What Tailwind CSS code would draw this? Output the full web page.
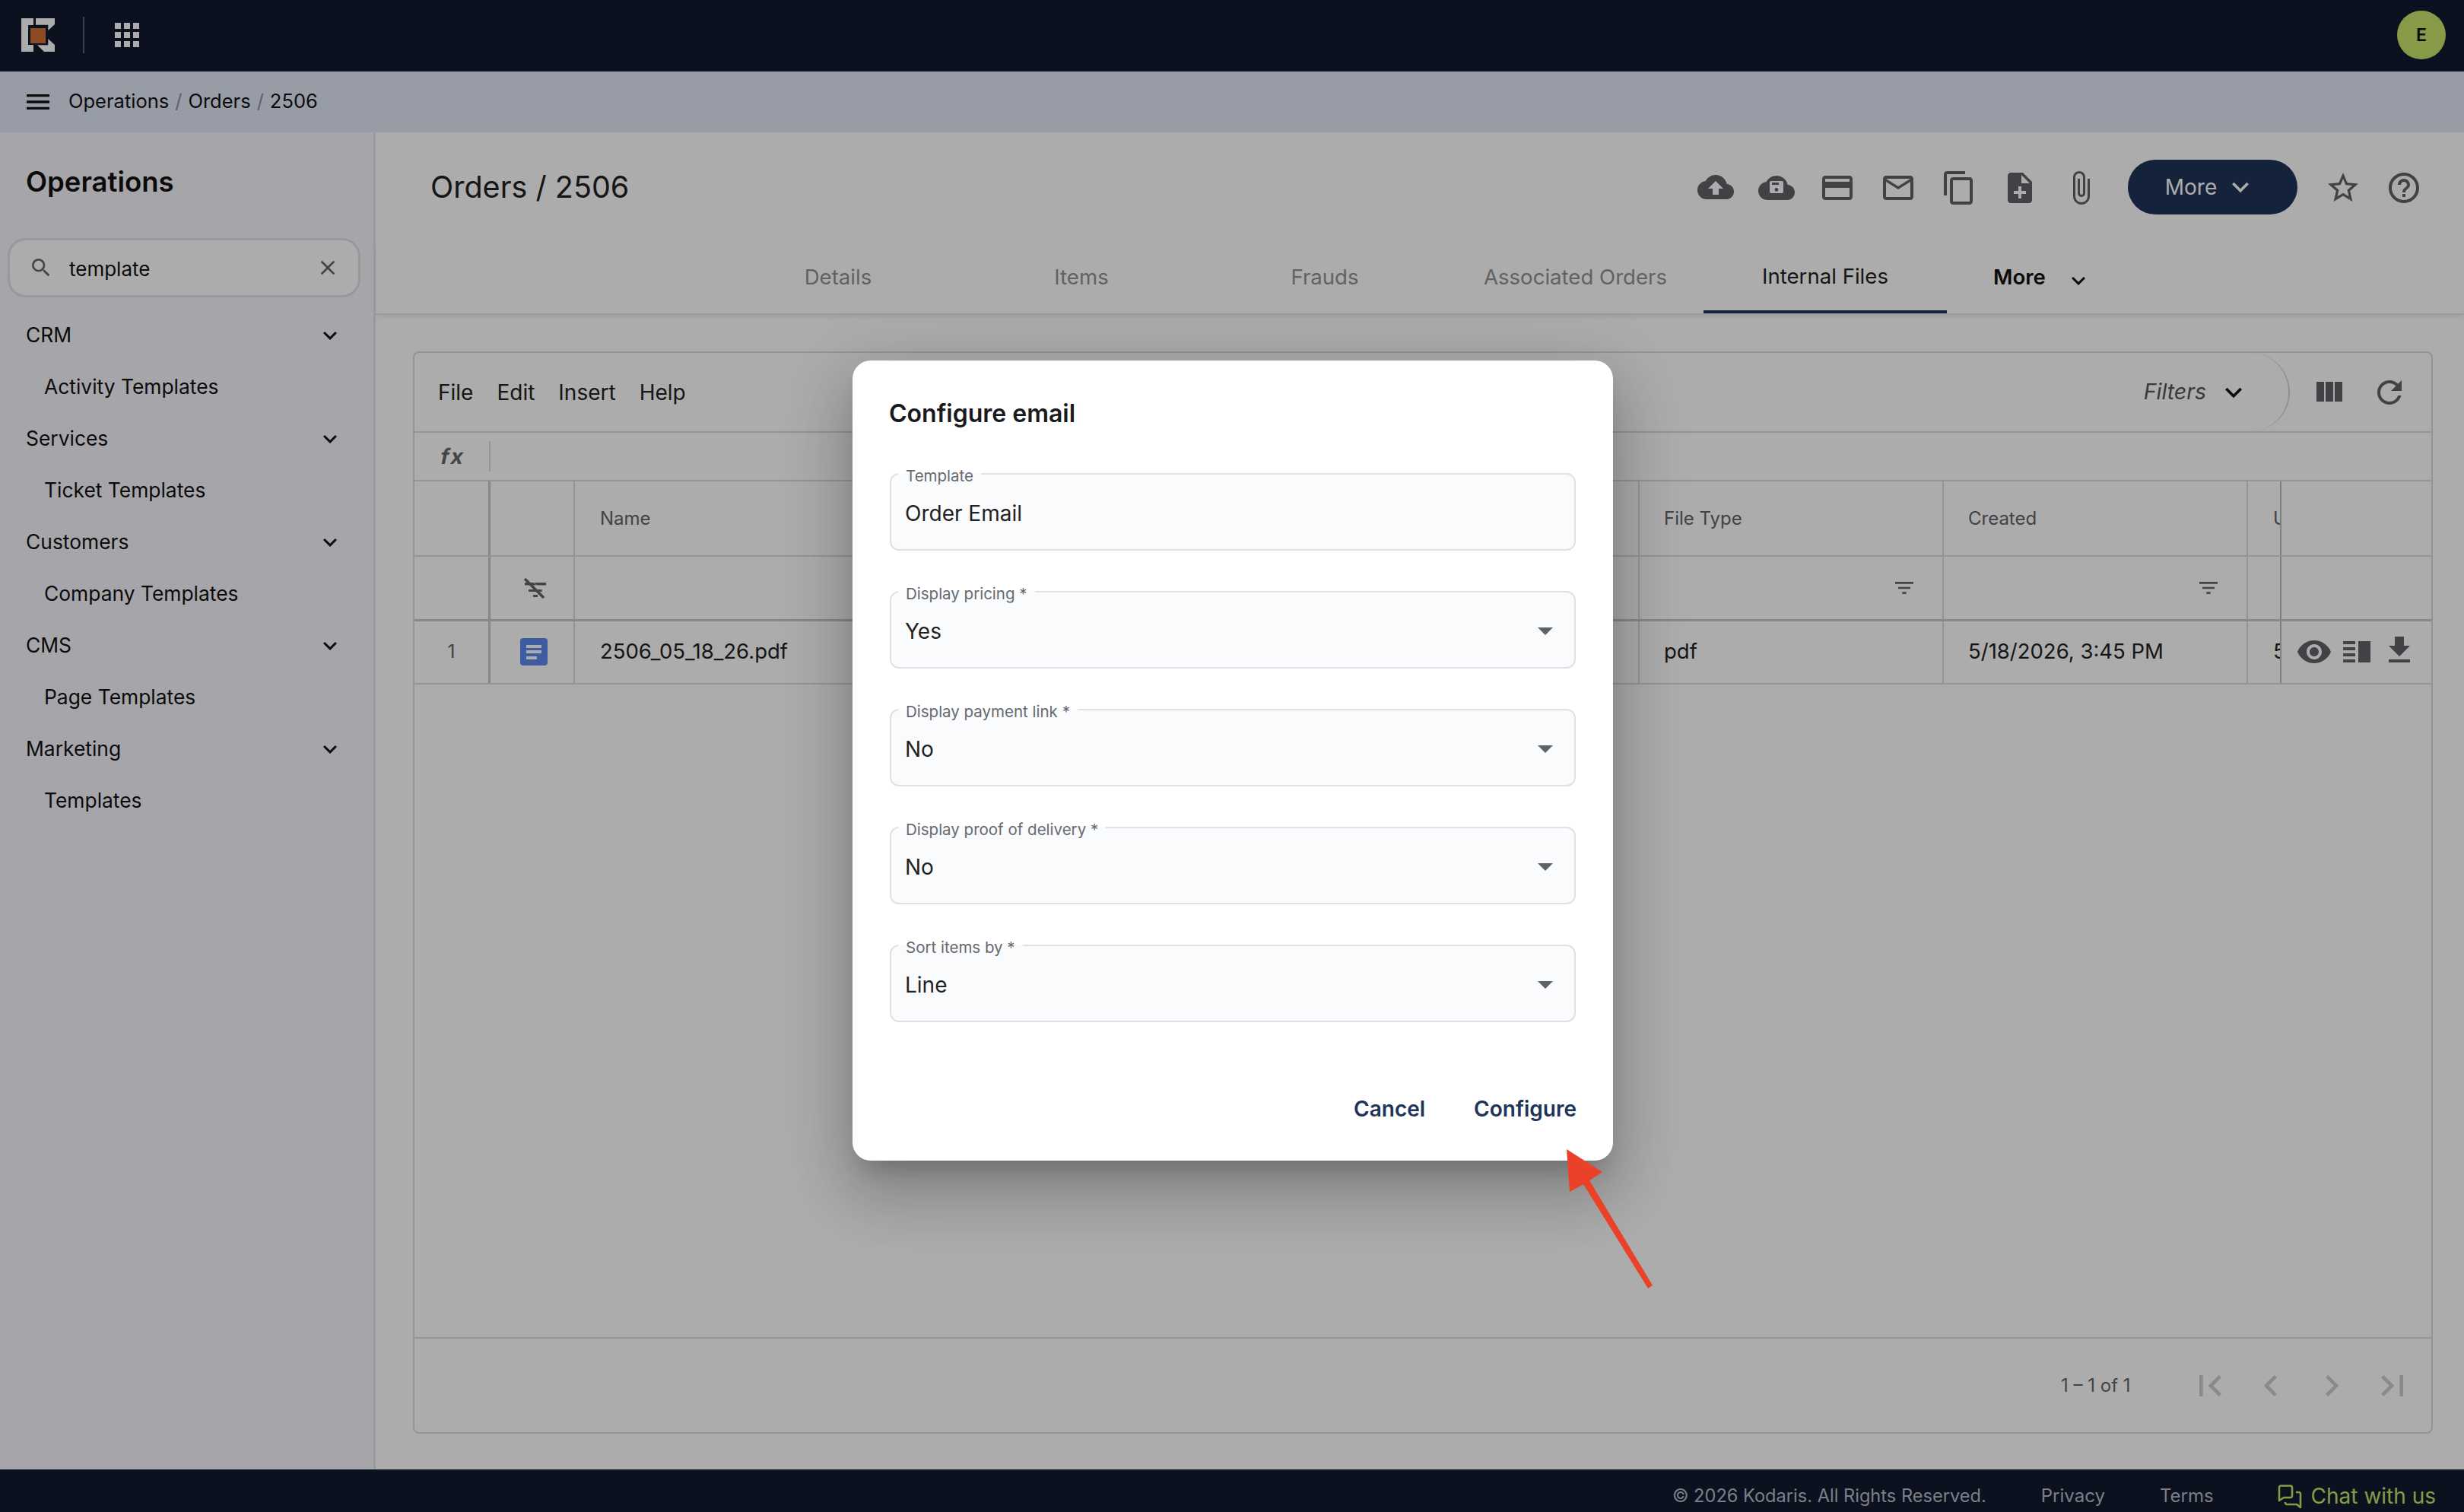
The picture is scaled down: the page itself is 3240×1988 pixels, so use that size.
<!DOCTYPE html>
<html lang="en">
<head>
<meta charset="utf-8">
<title>Orders / 2506</title>
<script src="https://cdn.jsdelivr.net/npm/@tailwindcss/browser@4"></script>
</head>
<body class="[font-family:Inter,sans-serif]">
<div class="relative w-[3240px] h-[1988px] overflow-hidden flex flex-col bg-white text-[#111]">

  <!-- top bar -->
  <header class="h-[94px] shrink-0 bg-[#111a2d] border-b-2 border-[#1a2234] flex items-center">
    <svg class="ml-[28px] w-[44px] h-[44px]" viewBox="0 0 44 44"><path fill="#fff" d="M0 0h16v9H9v26h7v9H0zM19 0h25v8l-8.700 8V8.700H19zM35.300 27 44 35v9H30l-9-8.700h14.300z"/><rect x="12" y="13" width="20" height="20" fill="#d26e37"/></svg>
    <div class="ml-[37px] w-[2px] h-[48px] bg-[#59606c]"></div>
    <svg class="ml-[32px] w-[48px] h-[48px]" viewBox="0 0 24 24" fill="#fff"><path d="M4 8h4V4H4v4zm6 12h4v-4h-4v4zm-6 0h4v-4H4v4zm0-6h4v-4H4v4zm6 0h4v-4h-4v4zm6-10v4h4V4h-4zm-6 4h4V4h-4v4zm6 6h4v-4h-4v4zm0 6h4v-4h-4v4z"/></svg>
    <div class="ml-auto mr-[24px] w-[64px] h-[64px] rounded-full bg-[#c9e56c] flex items-center justify-center text-[23px] font-semibold text-[#111]">E</div>
  </header>

  <!-- breadcrumb bar -->
  <nav class="h-[80px] shrink-0 bg-[#e2e8f6] flex items-center text-[25.5px] text-[#111] pb-[1px]">
    <svg class="ml-[30px] w-[40px] h-[40px]" viewBox="0 0 24 24" fill="#111"><path d="M3 18h18v-2H3v2zm0-5h18v-2H3v2zm0-7v2h18V6H3z"/></svg>
    <span class="ml-[20px]">Operations</span>
    <span class="mx-[8px] text-[#8d919b]">/</span>
    <span>Orders</span>
    <span class="mx-[8px] text-[#8d919b]">/</span>
    <span>2506</span>
  </nav>

  <div class="flex-1 flex min-h-0">
    <!-- sidebar -->
    <aside class="w-[494px] shrink-0 bg-[#f6f7fc] border-r-[3px] border-[#e3e4e8] flex flex-col">
      <div class="h-[130px] pl-[34px] flex items-center text-[36.5px] font-semibold">Operations</div>
      <div class="ml-[10px] mt-[9px] w-[464px] h-[78px] rounded-[24px] bg-white border-[3px] border-[#e0e1e5] flex items-center pl-[25px] pr-[24px] text-[26px]">
        <svg class="w-[32px] h-[32px] shrink-0" viewBox="0 0 24 24" fill="#666"><path d="M15.500 14h-.79l-.28-.27A6.470 6.470 0 0 0 16 9.500 6.500 6.500 0 1 0 9.500 16c1.610 0 3.090-.59 4.230-1.570l.27.28v.79l5 4.990L20.490 19l-4.990-5zm-6 0C7.010 14 5 11.990 5 9.500S7.010 5 9.500 5 14 7.010 14 9.500 11.990 14 9.500 14z"/></svg>
        <span class="ml-[21px] mt-[2px]">template</span>
        <svg class="ml-auto w-[32px] h-[32px]" viewBox="0 0 24 24" fill="#666"><path d="M19 6.410 17.590 5 12 10.590 6.410 5 5 6.410 10.590 12 5 17.590 6.410 19 12 13.410 17.590 19 19 17.590 13.410 12z"/></svg>
      </div>
      <ul class="mt-[16px] text-[26.4px]">
        <li class="h-[68px] pl-[34px] pr-[39px] flex items-center justify-between">CRM<svg class="w-[36px] h-[36px]" viewBox="0 0 24 24" fill="#111"><path d="M7.410 8.590 12 13.170l4.590-4.580L18 10l-6 6-6-6z"/></svg></li>
        <li class="h-[68px] pl-[58px] flex items-center">Activity Templates</li>
        <li class="h-[68px] pl-[34px] pr-[39px] flex items-center justify-between">Services<svg class="w-[36px] h-[36px]" viewBox="0 0 24 24" fill="#111"><path d="M7.410 8.590 12 13.170l4.590-4.580L18 10l-6 6-6-6z"/></svg></li>
        <li class="h-[68px] pl-[58px] flex items-center">Ticket Templates</li>
        <li class="h-[68px] pl-[34px] pr-[39px] flex items-center justify-between">Customers<svg class="w-[36px] h-[36px]" viewBox="0 0 24 24" fill="#111"><path d="M7.410 8.590 12 13.170l4.590-4.580L18 10l-6 6-6-6z"/></svg></li>
        <li class="h-[68px] pl-[58px] flex items-center">Company Templates</li>
        <li class="h-[68px] pl-[34px] pr-[39px] flex items-center justify-between">CMS<svg class="w-[36px] h-[36px]" viewBox="0 0 24 24" fill="#111"><path d="M7.410 8.590 12 13.170l4.590-4.580L18 10l-6 6-6-6z"/></svg></li>
        <li class="h-[68px] pl-[58px] flex items-center">Page Templates</li>
        <li class="h-[68px] pl-[34px] pr-[39px] flex items-center justify-between">Marketing<svg class="w-[36px] h-[36px]" viewBox="0 0 24 24" fill="#111"><path d="M7.410 8.590 12 13.170l4.590-4.580L18 10l-6 6-6-6z"/></svg></li>
        <li class="h-[68px] pl-[58px] flex items-center">Templates</li>
      </ul>
    </aside>

    <!-- main -->
    <main class="flex-1 min-w-0 flex flex-col bg-white">
      <div class="h-[146px] shrink-0 flex items-center pl-[72px] pr-[55px]">
        <h1 class="text-[39.5px] text-[#222]">Orders / 2506</h1>
        <div class="ml-auto flex items-center text-[#555860]">
          <div class="flex items-center gap-[32px] fill-[#5f6369]">
            <svg class="w-[48px] h-[48px] -mt-[3px]" viewBox="0 0 24 24"><path d="M19.350 10.040C18.670 6.590 15.640 4 12 4 9.110 4 6.600 5.640 5.350 8.040 2.340 8.360 0 10.910 0 14c0 3.310 2.690 6 6 6h13c2.760 0 5-2.240 5-5 0-2.640-2.050-4.780-4.650-4.960zM14 13v4h-4v-4H7l5-5 5 5h-3z"/></svg>
            <svg class="w-[48px] h-[48px]" viewBox="0 0 24 24"><path fill-rule="evenodd" d="M19.350 10.040C18.670 6.590 15.640 4 12 4 9.110 4 6.600 5.640 5.350 8.040 2.340 8.360 0 10.910 0 14c0 3.310 2.690 6 6 6h13c2.760 0 5-2.240 5-5 0-2.640-2.050-4.780-4.650-4.960zM8.500 7.500h7a1 1 0 0 1 1 1v6a1 1 0 0 1-1 1h-7a1 1 0 0 1-1-1v-6a1 1 0 0 1 1-1zM9 8.500h4.500V10H9zM12 12a1.200 1.200 0 1 0 0 2.400 1.200 1.200 0 0 0 0-2.400z"/></svg>
            <svg class="w-[48px] h-[48px]" viewBox="0 0 24 24"><path d="M20 4H4c-1.110 0-1.990.89-1.990 2L2 18c0 1.110.89 2 2 2h16c1.110 0 2-.89 2-2V6c0-1.110-.89-2-2-2zm0 14H4v-6h16v6zm0-10H4V6h16v2z"/></svg>
            <svg class="w-[48px] h-[48px]" viewBox="0 0 24 24"><path d="M20 4H4c-1.100 0-1.990.9-1.990 2L2 18c0 1.100.9 2 2 2h16c1.100 0 2-.9 2-2V6c0-1.100-.9-2-2-2zm0 14H4V8l8 5 8-5v10zm-8-7L4 6h16l-8 5z"/></svg>
            <svg class="w-[48px] h-[48px]" viewBox="0 0 24 24"><path d="M16 1H4c-1.100 0-2 .9-2 2v14h2V3h12V1zm3 4H8c-1.100 0-2 .9-2 2v14c0 1.100.9 2 2 2h11c1.100 0 2-.9 2-2V7c0-1.100-.9-2-2-2zm0 16H8V7h11v14z"/></svg>
            <svg class="w-[48px] h-[48px]" viewBox="0 0 24 24"><path d="M14 2H6c-1.100 0-1.990.9-1.990 2L4 20c0 1.100.89 2 1.990 2H18c1.100 0 2-.9 2-2V8l-6-6zm2 14h-3v3h-2v-3H8v-2h3v-3h2v3h3v2zm-3-7V3.500L18.500 9H13z"/></svg>
            <svg class="w-[48px] h-[48px]" viewBox="0 0 24 24"><path d="M16.500 6v11.500c0 2.210-1.790 4-4 4s-4-1.790-4-4V5c0-1.380 1.120-2.500 2.500-2.500s2.500 1.120 2.500 2.500v10.500c0 .55-.45 1-1 1s-1-.45-1-1V6H10v9.500c0 1.380 1.120 2.500 2.500 2.500s2.500-1.120 2.500-2.500V5c0-2.210-1.790-4-4-4S7 2.790 7 5v12.500c0 3.040 2.460 5.500 5.500 5.500s5.500-2.460 5.500-5.500V6h-1.500z"/></svg>
          </div>
          <button class="ml-[38px] w-[223px] h-[72px] rounded-[36px] bg-[#1e3458] text-white text-[28px] flex items-center justify-center gap-[9px] -mt-[2px] pr-[2px]"><span class="-ml-[2px]">More</span><svg class="w-[44px] h-[44px]" viewBox="0 0 24 24" fill="#fff"><path d="M7.410 8.590 12 13.170l4.590-4.580L18 10l-6 6-6-6z"/></svg></button>
          <svg class="ml-[36px] w-[48px] h-[48px] fill-[#5f6369]" viewBox="0 0 24 24"><path d="M22 9.240l-7.190-.62L12 2 9.190 8.630 2 9.240l5.460 4.730L5.820 21 12 17.270 18.180 21l-1.630-7.030L22 9.240zM12 15.400l-3.760 2.270 1-4.280-3.320-2.880 4.380-.38L12 6.100l1.710 4.040 4.380.38-3.320 2.880 1 4.280L12 15.400z"/></svg>
          <svg class="ml-[32px] w-[48px] h-[48px] fill-[#5f6369]" viewBox="0 0 24 24"><path d="M11 18h2v-2h-2v2zm1-16C6.480 2 2 6.480 2 12s4.480 10 10 10 10-4.480 10-10S17.520 2 12 2zm0 18c-4.410 0-8-3.590-8-8s3.590-8 8-8 8 3.590 8 8-3.590 8-8 8zm0-14c-2.210 0-4 1.790-4 4h2c0-1.100.9-2 2-2s2 .9 2 2c0 2-3 1.750-3 5h2c0-2.250 3-2.500 3-5 0-2.210-1.790-4-4-4z"/></svg>
        </div>
      </div>

      <!-- tabs -->
      <div class="h-[94px] shrink-0 border-b-2 border-[#e6e8ec] shadow-[0_5px_6px_-3px_rgba(0,0,0,0.1)] flex pl-[447px] text-[27.6px] text-[#8f9298]">
        <div class="w-[320px] flex items-center justify-center pb-[2px] pl-[2px]">Details</div>
        <div class="w-[320px] flex items-center justify-center pb-[2px] pl-[2px]">Items</div>
        <div class="w-[320px] flex items-center justify-center pb-[2px] pl-[2px]">Frauds</div>
        <div class="w-[339px] flex items-center justify-center pb-[2px] pl-[2px]">Associated Orders</div>
        <div class="w-[320px] flex items-center justify-center text-[#222] border-b-4 border-[#1e3458]">Internal Files</div>
        <div class="w-[240px] flex items-center pl-[61px] pb-[2px] gap-[25px] text-[#111] font-semibold">More<svg class="w-[36px] h-[36px] mt-[8px]" viewBox="0 0 24 24" fill="#111"><path d="M7.410 8.590 12 13.170l4.590-4.580L18 10l-6 6-6-6z"/></svg></div>
      </div>

      <!-- grid panel -->
      <section class="mt-[48px] mb-[47px] ml-[49px] mr-[41px] flex-1 min-h-0 border-2 border-[#dcdcdc] rounded-[8px] flex flex-col">
        <div class="h-[105px] shrink-0 border-b-2 border-[#dcdcdc] flex items-center text-[28px] text-[#222] pl-[31px]">
          <span>File</span><span class="ml-[31px]">Edit</span><span class="ml-[31px]">Insert</span><span class="ml-[31px]">Help</span>
          <div class="ml-auto h-full w-[385px] border-r-2 border-[#d6d6d6] rounded-r-[60px] flex items-center justify-end pr-[50px] gap-[14px]">
            <span class="italic text-[28.5px] text-[#555]">Filters</span>
            <svg class="w-[44px] h-[44px]" viewBox="0 0 24 24" fill="#111"><path d="M7.410 8.590 12 13.170l4.590-4.580L18 10l-6 6-6-6z"/></svg>
          </div>
          <div class="w-[186px] flex items-center gap-[32px] pl-[27px]">
            <svg class="w-[48px] h-[48px]" viewBox="0 0 24 24" fill="#5f6369"><path d="M10 18h5V5h-5v13zm-6 0h5V5H4v13zM16 5v13h5V5h-5z"/></svg>
            <svg class="w-[48px] h-[48px]" viewBox="0 0 24 24" fill="#5f6369"><path d="M17.650 6.350C16.200 4.900 14.210 4 12 4c-4.420 0-7.990 3.580-7.990 8s3.570 8 7.990 8c3.730 0 6.840-2.550 7.730-6h-2.080c-.82 2.330-3.040 4-5.650 4-3.310 0-6-2.690-6-6s2.690-6 6-6c1.660 0 3.140.69 4.220 1.780L13 11h7V4l-2.350 2.350z"/></svg>
          </div>
        </div>
        <div class="h-[64px] shrink-0 border-b-2 border-[#dcdcdc] flex items-center">
          <div class="w-[98px] pl-[35px]"><span class="inline-block -skew-x-12 tracking-[2px] font-bold text-[28px] text-[#666]">fx</span></div>
          <div class="w-[2px] h-[40px] bg-[#dcdcdc]"></div>
        </div>
        <!-- header row -->
        <div class="h-[99px] shrink-0 border-b-2 border-[#dcdcdc] flex text-[24px] text-[#5f6369]">
          <div class="w-[100px] border-r-[3px] border-[#c4c7cc]"></div>
          <div class="w-[111px] border-r-2 border-[#dcdcdc]"></div>
          <div class="w-[1400px] border-r-2 border-[#dcdcdc] pl-[33px] flex items-center">Name</div>
          <div class="w-[400px] border-r-2 border-[#dcdcdc] pl-[32px] flex items-center">File Type</div>
          <div class="w-[400px] border-r-2 border-[#dcdcdc] pl-[32px] flex items-center">Created</div>
          <div class="w-[44px] border-r-2 border-[#b9bcc2] pl-[33px] flex items-center overflow-hidden">U</div>
          <div class="flex-1"></div>
        </div>
        <!-- filter row -->
        <div class="h-[85px] shrink-0 border-b-[3px] border-[#c8cacd] flex">
          <div class="w-[100px] border-r-[3px] border-[#c4c7cc]"></div>
          <div class="w-[111px] border-r-2 border-[#dcdcdc] flex items-center justify-center">
            <svg class="w-[36px] h-[36px] ml-[8px]" viewBox="0 0 36 36" fill="#666"><path d="M4 11h28v3.500H4zM9 20h18v3H9zM15 27h6v3h-6z"/><path d="M4 6l25 25" stroke="#666" stroke-width="3.500"/><path d="M8 3l25 25" stroke="#fff" stroke-opacity=".45" stroke-width="1.200"/></svg>
          </div>
          <div class="w-[1400px] border-r-2 border-[#dcdcdc]"></div>
          <div class="w-[400px] border-r-2 border-[#dcdcdc] flex items-center justify-end pr-[34px]">
            <svg class="w-[32px] h-[32px]" viewBox="0 0 24 24" fill="#666"><path d="M10 18h4v-2h-4v2zM3 6v2h18V6H3zm3 7h12v-2H6v2z"/></svg>
          </div>
          <div class="w-[400px] border-r-2 border-[#dcdcdc] flex items-center justify-end pr-[34px]">
            <svg class="w-[32px] h-[32px]" viewBox="0 0 24 24" fill="#666"><path d="M10 18h4v-2h-4v2zM3 6v2h18V6H3zm3 7h12v-2H6v2z"/></svg>
          </div>
          <div class="w-[44px] border-r-2 border-[#b9bcc2]"></div>
          <div class="flex-1"></div>
        </div>
        <!-- data row -->
        <div class="h-[83px] shrink-0 border-b-2 border-[#dcdcdc] flex items-center text-[27.5px] text-[#222]">
          <div class="w-[100px] h-full border-r-[3px] border-[#c4c7cc] flex items-center justify-center text-[24.5px] text-[#5f6369] pb-[2px]">1</div>
          <div class="w-[111px] h-full border-r-2 border-[#dcdcdc] flex items-center justify-center pb-[2px]">
            <svg class="w-[36px] h-[36px] ml-[5px]" viewBox="0 0 36 36"><rect width="36" height="36" rx="4" fill="#5d8bed"/><path fill="#fff" d="M8 9h20v4H8zM8 16h20v4H8zM8 24h14v4H8z"/></svg>
          </div>
          <div class="w-[1400px] h-full border-r-2 border-[#dcdcdc] pl-[33px] flex items-center pb-[2px]">2506_05_18_26.pdf</div>
          <div class="w-[400px] h-full border-r-2 border-[#dcdcdc] pl-[32px] flex items-center pb-[2px]">pdf</div>
          <div class="w-[400px] h-full border-r-2 border-[#dcdcdc] pl-[32px] flex items-center pb-[2px]">5/18/2026, 3:45 PM</div>
          <div class="w-[44px] h-full border-r-2 border-[#b9bcc2] pl-[33px] flex items-center overflow-hidden pb-[2px]">5</div>
          <div class="flex-1 h-full flex items-center pl-[19px] gap-[8px] pb-[2px]">
            <svg class="w-[48px] h-[48px]" viewBox="0 0 24 24" fill="#5f6369"><path d="M12 4.500C7 4.500 2.730 7.610 1 12c1.730 4.390 6 7.500 11 7.500s9.270-3.110 11-7.500c-1.730-4.390-6-7.500-11-7.500zM12 17c-2.760 0-5-2.240-5-5s2.240-5 5-5 5 2.240 5 5-2.240 5-5 5zm0-8c-1.660 0-3 1.340-3 3s1.340 3 3 3 3-1.340 3-3-1.340-3-3-3z"/></svg>
            <svg class="w-[48px] h-[48px]" viewBox="0 0 24 24" fill="#5f6369"><path d="M3 15h8v-2H3v2zm0 4h8v-2H3v2zm0-8h8V9H3v2zm0-6v2h8V5H3zm10 0h8v14h-8V5z"/></svg>
            <svg class="w-[48px] h-[48px] -mt-[4px]" viewBox="0 0 24 24" fill="#5f6369"><path d="M19 9h-4V3H9v6H5l7 7 7-7zM5 18v2h14v-2H5z"/></svg>
          </div>
        </div>
        <div class="flex-1"></div>
        <!-- pagination -->
        <div class="h-[125px] shrink-0 border-t-2 border-[#dcdcdc] flex items-center text-[24px] text-[#666] pl-[2165px]">
          <span class="whitespace-nowrap">1 – 1 of 1</span>
          <div class="ml-[76px] flex items-center gap-[24px] fill-[#cdcdcd]">
            <svg class="w-[56px] h-[56px]" viewBox="0 0 24 24"><path d="M18.410 16.590 13.820 12l4.590-4.590L17 6l-6 6 6 6zM6 6h2v12H6z"/></svg>
            <svg class="w-[56px] h-[56px]" viewBox="0 0 24 24"><path d="M15.410 7.410 14 6l-6 6 6 6 1.410-1.410L10.830 12z"/></svg>
            <svg class="w-[56px] h-[56px]" viewBox="0 0 24 24"><path d="M10 6 8.590 7.410 13.170 12l-4.580 4.590L10 18l6-6z"/></svg>
            <svg class="w-[56px] h-[56px]" viewBox="0 0 24 24"><path d="M5.590 7.410 10.180 12l-4.590 4.590L7 18l6-6-6-6zM16 6h2v12h-2z"/></svg>
          </div>
        </div>
      </section>
    </main>
  </div>

  <!-- footer -->
  <footer class="h-[56px] shrink-0 bg-[#111a2d] border-t-2 border-[#1a2234] flex items-center justify-end pr-[37px] text-[24px] text-[#b8bdc8] pt-[12px]">
    <span class="text-[23.6px]">© 2026 Kodaris. All Rights Reserved.</span>
    <span class="ml-[72px]">Privacy</span>
    <span class="ml-[72px]">Terms</span>
    <svg class="ml-[84px] w-[32px] h-[32px] mt-[2px]" viewBox="0 0 32 32" fill="none" stroke="#c9e56c" stroke-width="2.600" stroke-linejoin="round"><path d="M2 3.500C2 2.500 3 1.500 4 1.500h13c1 0 2 1 2 2V15c0 1-1 2-2 2H8l-6 4z"/><path d="M24 10h4c1 0 2 1 2 2v18l-5-4H12c-1 0-2-1-2-2v-1"/></svg>
    <span class="ml-[12px] text-[28px] text-[#c9e56c]">Chat with us</span>
  </footer>

  <!-- modal backdrop -->
  <div class="absolute inset-0 bg-black/[0.325]"></div>

  <!-- modal -->
  <div class="absolute left-[1121px] top-[474px] w-[1000px] h-[1052px] rounded-[24px] bg-white px-[49px] shadow-[0_22px_30px_-14px_rgba(0,0,0,0.2),0_48px_76px_6px_rgba(0,0,0,0.14),0_18px_92px_16px_rgba(0,0,0,0.12)] flex flex-col">
    <h2 class="h-[148px] pt-[46px] text-[32px] font-semibold text-[#1a1a1e] -ml-[1px]">Configure email</h2>
    <div class="flex flex-col gap-[53px]">
      <div class="relative h-[102px] rounded-[12px] border-2 border-[#e0e1e4] bg-[#fafbfd] pl-[18px] pr-[28px] flex items-center">
        <span class="absolute left-[9px] -top-[10px] px-[10px] h-[24px] leading-[24px] text-[20.5px] text-[#666a70] bg-[linear-gradient(#fff_33%,#fafbfd_33%)]">Template</span>
        <span class="text-[28px] text-[#222] mt-[3px]">Order Email</span>
      </div>
      <div class="relative h-[102px] rounded-[12px] border-2 border-[#e0e1e4] bg-[#fafbfd] pl-[18px] pr-[28px] flex items-center justify-between">
        <span class="absolute left-[9px] -top-[10px] px-[10px] h-[24px] leading-[24px] text-[20.5px] text-[#666a70] bg-[linear-gradient(#fff_33%,#fafbfd_33%)]">Display pricing *</span>
        <span class="text-[28px] text-[#222] mt-[3px]">Yes</span>
        <span class="w-0 h-0 border-x-[10px] border-x-transparent border-t-[10px] border-t-[#5f6369] mt-[4px]"></span>
      </div>
      <div class="relative h-[102px] rounded-[12px] border-2 border-[#e0e1e4] bg-[#fafbfd] pl-[18px] pr-[28px] flex items-center justify-between">
        <span class="absolute left-[9px] -top-[10px] px-[10px] h-[24px] leading-[24px] text-[20.5px] text-[#666a70] bg-[linear-gradient(#fff_33%,#fafbfd_33%)]">Display payment link *</span>
        <span class="text-[28px] text-[#222] mt-[3px]">No</span>
        <span class="w-0 h-0 border-x-[10px] border-x-transparent border-t-[10px] border-t-[#5f6369] mt-[4px]"></span>
      </div>
      <div class="relative h-[102px] rounded-[12px] border-2 border-[#e0e1e4] bg-[#fafbfd] pl-[18px] pr-[28px] flex items-center justify-between">
        <span class="absolute left-[9px] -top-[10px] px-[10px] h-[24px] leading-[24px] text-[20.5px] text-[#666a70] bg-[linear-gradient(#fff_33%,#fafbfd_33%)]">Display proof of delivery *</span>
        <span class="text-[28px] text-[#222] mt-[3px]">No</span>
        <span class="w-0 h-0 border-x-[10px] border-x-transparent border-t-[10px] border-t-[#5f6369] mt-[4px]"></span>
      </div>
      <div class="relative h-[102px] rounded-[12px] border-2 border-[#e0e1e4] bg-[#fafbfd] pl-[18px] pr-[28px] flex items-center justify-between">
        <span class="absolute left-[9px] -top-[10px] px-[10px] h-[24px] leading-[24px] text-[20.5px] text-[#666a70] bg-[linear-gradient(#fff_33%,#fafbfd_33%)]">Sort items by *</span>
        <span class="text-[28px] text-[#222] mt-[3px]">Line</span>
        <span class="w-0 h-0 border-x-[10px] border-x-transparent border-t-[10px] border-t-[#5f6369] mt-[4px]"></span>
      </div>
    </div>
    <div class="mt-[93px] flex justify-end gap-[64px] text-[28px] font-semibold text-[#1e3458] -mr-[1px]">
      <span>Cancel</span><span>Configure</span>
    </div>
  </div>

  <!-- annotation arrow -->
  <svg class="absolute left-[2040px] top-[1500px] w-[150px] h-[210px]" viewBox="2040 1500 150 210"><polygon fill="#ea4128" points="2060,1511 2107,1541 2090,1552 2173,1690 2167,1694 2082,1557 2064,1567"/></svg>
</div>
</body>
</html>
